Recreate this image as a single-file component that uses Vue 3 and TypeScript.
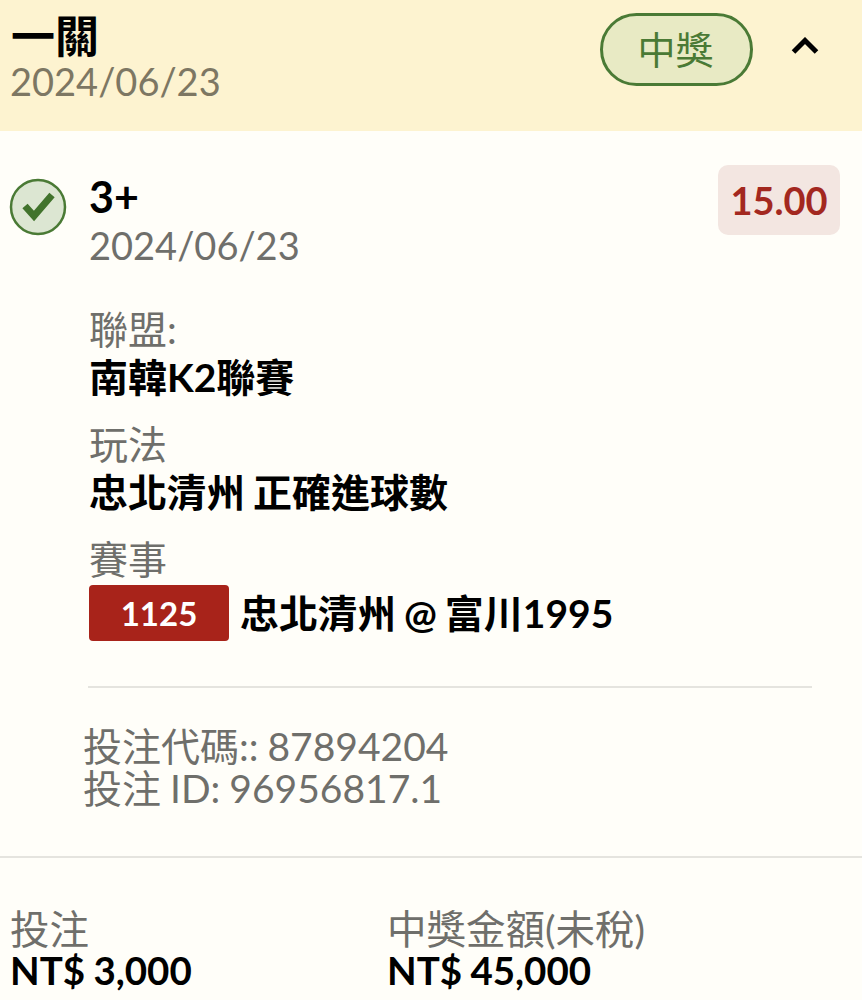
<script setup lang="ts">
const fields = [
  { label: '聯盟:', value: '南韓K2聯賽' },
  { label: '玩法', value: '忠北清州 正確進球數' },
]
</script>

<template>
  <div class="page">
    <header class="head">
      <div class="head__text">
        <div class="head__title">一關</div>
        <div class="head__date">2024/06/23</div>
      </div>
      <span class="badge">中獎</span>
      <svg class="chevron" width="28" height="18" viewBox="0 0 28 18">
        <path d="M2.5 15 L14 3.5 L25.5 15" fill="none" stroke="#000" stroke-width="5" />
      </svg>
    </header>

    <section class="bet">
      <svg class="check" width="58" height="58" viewBox="0 0 58 58">
        <circle cx="29" cy="29" r="27" fill="#dce6d2" stroke="#4a7a35" stroke-width="2.5" />
        <path d="M16 28 L25 38 L43 17" fill="none" stroke="#41732c" stroke-width="7" />
      </svg>
      <div class="bet__main">
        <div class="bet__name">3+</div>
        <div class="bet__date">2024/06/23</div>

        <div v-for="f in fields" :key="f.label" class="field">
          <div class="field__label">{{ f.label }}</div>
          <div class="field__value">{{ f.value }}</div>
        </div>

        <div class="field">
          <div class="field__label">賽事</div>
          <div class="match">
            <span class="match__no">1125</span>
            <span class="field__value">忠北清州 @ 富川1995</span>
          </div>
        </div>
      </div>
      <span class="odds">15.00</span>
    </section>

    <div class="rule-wrap"><hr class="rule" /></div>

    <div class="ids">
      <div>投注代碼:: 87894204</div>
      <div>投注 ID: 96956817.1</div>
    </div>

    <footer class="totals">
      <div class="totals__col">
        <div class="totals__label">投注</div>
        <div class="totals__value">NT$ 3,000</div>
      </div>
      <div class="totals__col">
        <div class="totals__label">中獎金額(未稅)</div>
        <div class="totals__value">NT$ 45,000</div>
      </div>
    </footer>
  </div>
</template>

<style scoped>
* { box-sizing: border-box; }

.page {
  width: 862px;
  height: 1000px;
  overflow: hidden;
  background: #fffef9;
  font-family: Lato, "Noto Sans CJK TC", sans-serif;
  color: #000;
}

.head {
  height: 131px;
  background: #fdf3d0;
  display: flex;
  align-items: flex-start;
  padding: 14px 43px 0 10px;
}
.head__text { flex: 1; }
.head__title { font-size: 44px; font-weight: 700; line-height: 44px; margin-left: 1px; }
.head__date { font-size: 38px; line-height: 46px; color: #7d7763; }

.badge {
  width: 153px;
  height: 73px;
  margin-top: -1px;
  padding: 0 2px 4px 0;
  border: 3px solid #4a7a35;
  border-radius: 37px;
  background: #e8eac4;
  color: #4a7a35;
  font-size: 38px;
  display: flex;
  align-items: center;
  justify-content: center;
}
.chevron { margin: 23px 0 0 38px; }

.bet {
  display: flex;
  align-items: flex-start;
  padding: 34px 22px 0 9px;
}
.check { margin-top: 13px; flex: none; }
.bet__main { flex: 1; margin-left: 22px; }
.bet__name { font-size: 43px; font-weight: 700; line-height: 46px; margin-top: 9px; }
.bet__date { font-size: 38px; line-height: 50px; color: #6f6f6b; }

.field { margin-top: 19px; }
.bet__date + .field { margin-top: 34px; }
.field__label { font-size: 39px; line-height: 50px; color: #6f6f6b; }
.field__value { font-size: 39px; font-weight: 700; line-height: 46px; word-spacing: -1.5px; }

.match { display: flex; align-items: center; gap: 11px; margin-top: 1px; }
.match__no {
  width: 140px;
  height: 56px;
  border-radius: 4px;
  background: #a8231a;
  color: #fff;
  font-size: 33px;
  font-weight: 700;
  display: flex;
  align-items: center;
  justify-content: center;
}

.odds {
  width: 122px;
  height: 70px;
  border-radius: 10px;
  background: #f3e6e1;
  color: #a3281f;
  font-size: 38px;
  font-weight: 700;
  display: flex;
  align-items: center;
  justify-content: center;
  flex: none;
}

.rule-wrap { padding: 45px 50px 0 88px; }
.rule { border: 0; height: 2px; background: #e5e4df; margin: 0; }

.ids {
  padding: 37px 0 0 83px;
  font-size: 39px;
  line-height: 42px;
  word-spacing: -1px;
  color: #6f6f6b;
  height: 170px;
  border-bottom: 2px solid #e5e4df;
}

.totals { display: flex; padding: 50px 0 0 10px; }
.totals__col { width: 377px; }
.totals__label { font-size: 39.5px; line-height: 42px; color: #6f6f6b; }
.totals__value { font-size: 38.5px; font-weight: 700; line-height: 40px; word-spacing: -1px; }
</style>
